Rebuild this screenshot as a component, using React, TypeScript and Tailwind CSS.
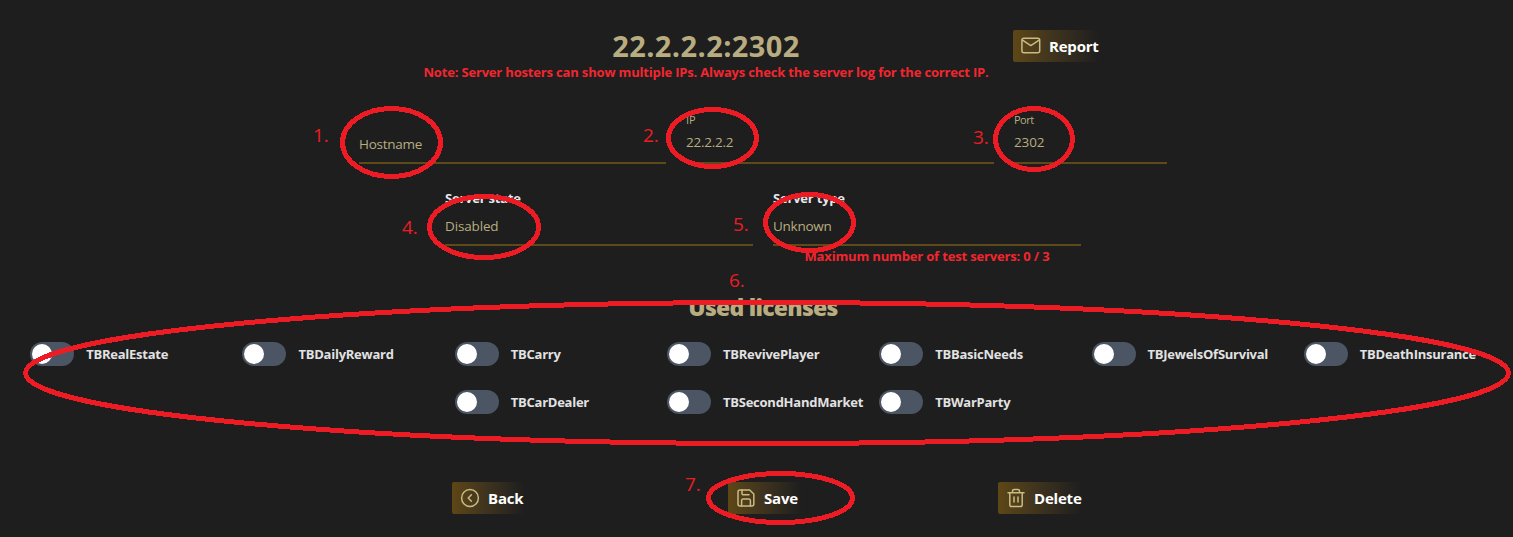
import type { ReactNode } from "react";

const licenses = [
  "TBRealEstate",
  "TBDailyReward",
  "TBCarry",
  "TBRevivePlayer",
  "TBBasicNeeds",
  "TBJewelsOfSurvival",
  "TBDeathInsurance",
  "TBCarDealer",
  "TBSecondHandMarket",
  "TBWarParty",
];

function Icon({ children }: { children: ReactNode }) {
  return (
    <svg
      viewBox="0 0 20 20"
      className="size-5 shrink-0 fill-none stroke-[#c9bb83]"
      strokeWidth="1.5"
      strokeLinecap="round"
      strokeLinejoin="round"
    >
      {children}
    </svg>
  );
}

function ActionButton({ label, icon, className }: { label: string; icon: ReactNode; className: string }) {
  return (
    <button
      className={`flex h-8 items-center gap-2 rounded-xs bg-linear-to-r from-[#5e4716] to-[#1e1e1e] pl-2 text-[15px] leading-6 font-bold tracking-[-0.2px] whitespace-nowrap text-white ${className}`}
    >
      <Icon>{icon}</Icon>
      <span>{label}</span>
    </button>
  );
}

function Toggle({ label }: { label: string }) {
  return (
    <div className="flex h-6 w-[212.28px] items-center gap-3">
      <button role="switch" aria-checked="false" className="h-6 w-11 shrink-0 rounded-full bg-[#4b5563] p-0.5">
        <span className="block size-5 rounded-full bg-white" />
      </button>
      <span className="text-[13px] leading-5 font-bold tracking-[-0.25px] whitespace-nowrap text-[#e2e2e2]">
        {label}
      </span>
    </div>
  );
}

function Ring({ x1, y1, x2, y2 }: { x1: number; y1: number; x2: number; y2: number }) {
  return (
    <ellipse cx={(x1 + x2) / 2} cy={(y1 + y2) / 2} rx={(x2 - x1) / 2 - 2.5} ry={(y2 - y1) / 2 - 2.5} />
  );
}

function Annotations() {
  return (
    <svg viewBox="0 0 1513 537" className="pointer-events-none absolute inset-0 h-[537px] w-[1513px]">
      <g fill="none" stroke="#ed1c24" strokeWidth="5" shapeRendering="crispEdges">
        <Ring x1={340} y1={106} x2={443} y2={179} />
        <Ring x1={666} y1={107} x2={759} y2={169} />
        <Ring x1={993} y1={106} x2={1075} y2={172} />
        <Ring x1={427} y1={194} x2={541} y2={260} />
        <Ring x1={763} y1={192} x2={856} y2={253} />
        <Ring x1={23} y1={300} x2={1511} y2={446} />
        <Ring x1={706} y1={471} x2={855} y2={525} />
      </g>
      <g fill="#ed1c24" fontSize="19">
        <text x="313" y="142">1.</text>
        <text x="643" y="142">2.</text>
        <text x="973" y="144">3.</text>
        <text x="402" y="234">4.</text>
        <text x="733" y="231">5.</text>
        <text x="729" y="287">6.</text>
        <text x="685" y="491">7.</text>
      </g>
    </svg>
  );
}

export default function App() {
  return (
    <main className="relative flex h-[537px] w-[1513px] flex-col overflow-hidden bg-[#1e1e1e] font-['Open_Sans','Noto_Sans',sans-serif] text-[#b8ad80]">
      <header className="flex h-[84px] pt-[28px]">
        <div className="ml-[406px] w-[600px] text-center">
          <h1 className="text-[29px] leading-9 font-bold tracking-[0.4px]">22.2.2.2:2302</h1>
          <p className="-mt-[2px] text-[13px] leading-5 font-bold tracking-[-0.17px] whitespace-nowrap text-[#f3262f]">
            Note: Server hosters can show multiple IPs. Always check the server log for the correct IP.
          </p>
        </div>
        <ActionButton
          label="Report"
          className="mt-[2px] ml-[7px] w-[86px]"
          icon={
            <>
              <rect x="0.9" y="2.3" width="17.8" height="14.4" rx="2" />
              <path d="M1.5 4.2 9.8 9.6 18.1 4.2" />
            </>
          }
        />
      </header>

      <section className="flex gap-5 pt-[26px] pl-[359px] text-[13.5px]">
        <div className="h-[54px] w-[307px] border-b-2 border-[#5e4919] pt-[24px] leading-5">
          <span className="tracking-[-0.25px]">Hostname</span>
        </div>
        <div className="h-[54px] w-[308px] border-b-2 border-[#5e4919] leading-5">
          <div className="h-[22px] text-[11px] leading-5">IP</div>
          <div className="text-[13.5px] leading-5 tracking-[-0.25px]">22.2.2.2</div>
        </div>
        <div className="h-[54px] w-[153px] border-b-2 border-[#5e4919] leading-5">
          <div className="h-[22px] text-[11px] leading-5 tracking-[-0.5px]">Port</div>
          <div className="text-[13.5px] leading-5 tracking-[-0.15px]">2302</div>
        </div>
      </section>

      <section className="flex gap-5 pt-[24px] pl-[445px] text-[13.5px] leading-5">
        <div className="h-[58px] w-[308px] border-b-2 border-[#5e4919]">
          <div className="h-7 text-[13px] leading-5 font-bold tracking-[-0.22px] text-[#e5e7eb]">Server state</div>
          <div className="tracking-[-0.15px]">Disabled</div>
        </div>
        <div className="h-[58px] w-[308px] border-b-2 border-[#5e4919]">
          <div className="h-7 text-[13px] leading-5 font-bold tracking-[-0.2px] text-[#e5e7eb]">Server type</div>
          <div className="tracking-[-0.25px]">Unknown</div>
        </div>
      </section>
      <p className="ml-[773px] w-[308px] text-center text-[13px] leading-5 font-bold tracking-[-0.16px] text-[#f3262f]">
        Maximum number of test servers: 0 / 3
      </p>

      <h2 className="mt-[25px] ml-[13px] text-center text-[23px] leading-8 font-extrabold tracking-[-0.75px]">
        Used licenses
      </h2>
      <section className="mt-[19px] ml-[30.1px] flex w-[1486.1px] flex-wrap justify-center gap-y-6">
        {licenses.map((name) => (
          <Toggle key={name} label={name} />
        ))}
      </section>

      <footer className="mt-[68px] flex pl-[452px]">
        <ActionButton
          label="Back"
          className="mr-[203px] w-[73px]"
          icon={
            <>
              <circle cx="10" cy="10" r="8.4" />
              <path d="m11.4 6.8-3.2 3.2 3.2 3.2" />
            </>
          }
        />
        <ActionButton
          label="Save"
          className="mr-[196px] w-[74px]"
          icon={
            <>
              <path d="M4 2h9.7L17.8 6v10a2 2 0 0 1-2 2H4a2 2 0 0 1-2-2V4a2 2 0 0 1 2-2Z" />
              <path d="M6 2.2v3.6a1 1 0 0 0 1 1h6M5.6 17.8v-5.3a1.4 1.4 0 0 1 1.4-1.4h6a1.4 1.4 0 0 1 1.4 1.4v5.3" />
            </>
          }
        />
        <ActionButton
          label="Delete"
          className="w-[84px]"
          icon={
            <>
              <path d="M2 4.8h16M3.8 4.8v12a1.8 1.8 0 0 0 1.8 1.8h8.8a1.8 1.8 0 0 0 1.8-1.8v-12M6.5 4.6V3a1.6 1.6 0 0 1 1.6-1.6h3.8A1.6 1.6 0 0 1 13.5 3v1.6M8 9v5M12 9v5" />
            </>
          }
        />
      </footer>
      <Annotations />
    </main>
  );
}
